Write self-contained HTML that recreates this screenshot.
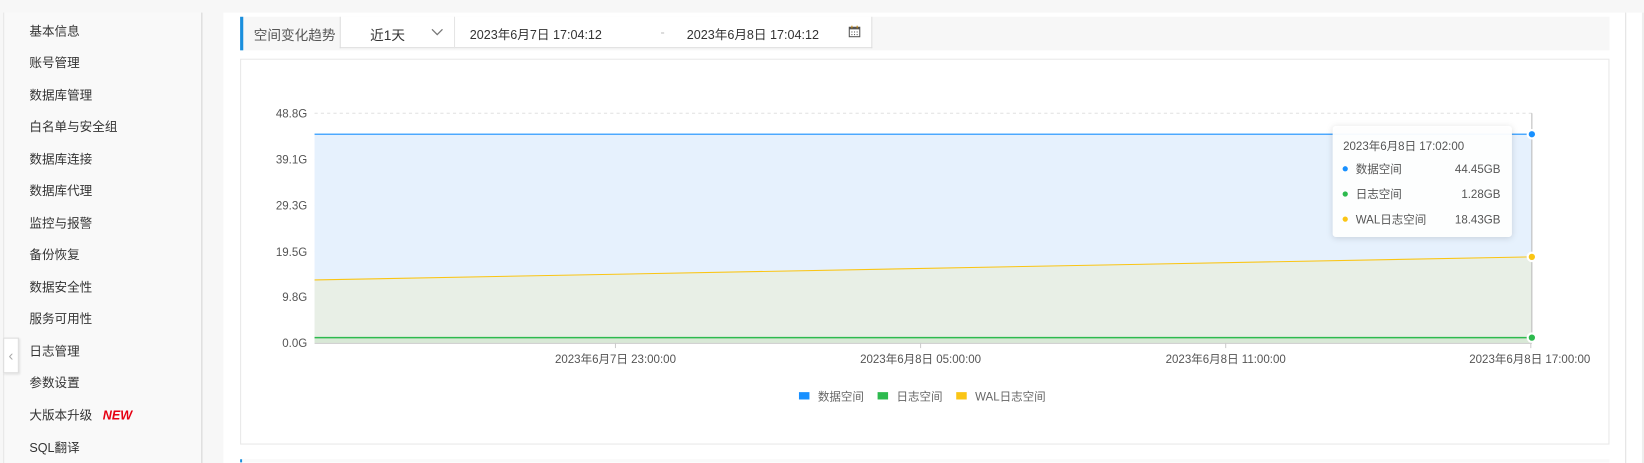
<!DOCTYPE html>
<html><head><meta charset="utf-8"><style>
*{margin:0;padding:0;box-sizing:border-box}
html,body{width:1644px;height:462px;overflow:hidden;background:#f7f7f7}
#w{position:absolute;left:0;top:0;width:1568px;height:441px;transform:scale(1.0485);transform-origin:0 0;font-family:"Liberation Sans","Noto Sans CJK SC",sans-serif;color:#333}
.main{position:absolute;left:213px;top:12px;width:1322px;height:430px;background:#fff}
.main2{position:absolute;left:1535px;top:12px;width:35px;height:430px;background:#fff}
.side{position:absolute;left:3px;top:12px;width:190px;height:430px;background:#f9f9f9;border-left:1px solid #e6e6e6;border-right:1px solid #d4d4d4}
.side div{position:absolute;left:24px;font-size:12px;color:#333;line-height:16px}
.new{color:#e60012;font-weight:bold;font-style:italic;margin-left:10px}
.coll{position:absolute;left:3px;top:322px;width:15px;height:34px;background:#fff;border:1px solid #ddd;box-shadow:1px 1px 2px rgba(0,0,0,.1);color:#aaa;font-size:14px;text-align:center;line-height:32px}
.hdr{position:absolute;left:229px;top:16px;width:1306px;height:32px;background:#f7f7f7;border-left:3px solid #1a8fdd}
.hdr .t{position:absolute;left:10px;top:7px;font-size:13px;color:#555}
.pick{position:absolute;left:324px;top:16px;width:508px;height:30px;background:#fff;border:1px solid #ddd;border-top:none;font-size:12px;color:#333}
.pick span{position:absolute;top:8px}
.box{position:absolute;left:229px;top:56px;width:1306px;height:368px;border:1px solid #e8e8e8;background:#fff}
.sb{position:absolute;left:1550px;top:12px;width:1px;height:430px;background:#e0e0e0}
.sb2{position:absolute;left:1566px;top:12px;width:2px;height:430px;background:#eee}
</style></head><body><div id="w">
<div class="main"></div><div class="main2"></div>
<div class="side">
<div style="top:10px">基本信息</div>
<div style="top:40px">账号管理</div>
<div style="top:71px">数据库管理</div>
<div style="top:101px">白名单与安全组</div>
<div style="top:132px">数据库连接</div>
<div style="top:162px">数据库代理</div>
<div style="top:193px">监控与报警</div>
<div style="top:223px">备份恢复</div>
<div style="top:254px">数据安全性</div>
<div style="top:284px">服务可用性</div>
<div style="top:315px">日志管理</div>
<div style="top:345px">参数设置</div>
<div style="top:376px">大版本升级<span class="new">NEW</span></div>
<div style="top:407px">SQL翻译</div>
</div>
<div class="coll">‹</div>
<div class="hdr"><span class="t">空间变化趋势</span></div>
<div class="pick">
<span style="left:28px;font-size:13px;top:7px">近1天</span>
<svg style="position:absolute;left:86px;top:10px" width="12" height="10" viewBox="0 0 12 10"><path d="M1 2 L6 7 L11 2" fill="none" stroke="#777" stroke-width="1.2"/></svg>
<div style="position:absolute;left:108px;top:0;width:1px;height:30px;background:#e5e5e5"></div>
<span style="left:123px">2023年6月7日 17:04:12</span>
<span style="left:305px;color:#bbb">-</span>
<span style="left:330px">2023年6月8日 17:04:12</span>
<svg style="position:absolute;left:484px;top:8px" width="12" height="12" viewBox="0 0 12 12"><rect x="1" y="2" width="10" height="9" fill="none" stroke="#555"/><rect x="1" y="2" width="10" height="2" fill="#555"/><rect x="3" y="0.5" width="1" height="2.5" fill="#c8860a"/><rect x="8" y="0.5" width="1" height="2.5" fill="#c8860a"/><g fill="#555"><rect x="3" y="6" width="1" height="1"/><rect x="5.5" y="6" width="1" height="1"/><rect x="8" y="6" width="1" height="1"/><rect x="3" y="8.5" width="1" height="1"/><rect x="5.5" y="8.5" width="1" height="1"/><rect x="8" y="8.5" width="1" height="1"/></g></svg>
</div>
<div class="box"></div>
<svg style="position:absolute;left:0;top:0" width="1568" height="441" font-family="Liberation Sans, Noto Sans CJK SC, sans-serif">
<g stroke="#e0e0e0" stroke-dasharray="3,3">
<line x1="300" y1="108" x2="1461" y2="108"/><line x1="300" y1="152" x2="1461" y2="152"/><line x1="300" y1="196" x2="1461" y2="196"/><line x1="300" y1="240" x2="1461" y2="240"/><line x1="300" y1="283" x2="1461" y2="283"/>
</g>
<polygon points="300,128 1461,128 1461,327 300,327" fill="#e6f1fd"/>
<polygon points="300,267 1461,245 1461,327 300,327" fill="#e8efe6"/>
<polygon points="300,322 1461,322 1461,327 300,327" fill="#d8e8d6"/>
<line x1="300" y1="128" x2="1461" y2="128" stroke="#1890ff"/>
<line x1="300" y1="267" x2="1461" y2="245" stroke="#fac515"/>
<line x1="300" y1="322" x2="1461" y2="322" stroke="#2dba4e" stroke-width="1.5"/>
<line x1="300" y1="327.5" x2="1461" y2="327.5" stroke="#ccc"/>
<line x1="1461" y1="108" x2="1461" y2="327" stroke="#bbb"/>
<g stroke="#ccc"><line x1="587" y1="327" x2="587" y2="332"/><line x1="878" y1="327" x2="878" y2="332"/><line x1="1169" y1="327" x2="1169" y2="332"/><line x1="1460" y1="327" x2="1460" y2="332"/></g>
<g font-size="11" fill="#555" text-anchor="end"><text x="293" y="112">48.8G</text><text x="293" y="156">39.1G</text><text x="293" y="200">29.3G</text><text x="293" y="244">19.5G</text><text x="293" y="287">9.8G</text><text x="293" y="331">0.0G</text></g>
<g font-size="11" fill="#555" text-anchor="middle"><text x="587" y="346">2023年6月7日 23:00:00</text><text x="878" y="346">2023年6月8日 05:00:00</text><text x="1169" y="346">2023年6月8日 11:00:00</text><text x="1459" y="346">2023年6月8日 17:00:00</text></g>
<g stroke="#fff" stroke-width="2"><circle cx="1461" cy="128" r="4" fill="#1890ff"/><circle cx="1461" cy="245" r="4" fill="#fac515"/><circle cx="1461" cy="322" r="4" fill="#2dba4e"/></g>
<rect x="1271" y="120" width="171" height="106" rx="3" fill="#fff" fill-opacity="0.95" style="filter:drop-shadow(0 1px 3px rgba(0,0,0,.15))"/>
<g font-size="11" fill="#555"><text x="1281" y="143">2023年6月8日 17:02:00</text>
<circle cx="1283" cy="161" r="2.5" fill="#1890ff"/><text x="1293" y="165">数据空间</text><text x="1431" y="165" text-anchor="end">44.45GB</text>
<circle cx="1283" cy="185" r="2.5" fill="#2dba4e"/><text x="1293" y="189">日志空间</text><text x="1431" y="189" text-anchor="end">1.28GB</text>
<circle cx="1283" cy="209" r="2.5" fill="#fac515"/><text x="1293" y="213">WAL日志空间</text><text x="1431" y="213" text-anchor="end">18.43GB</text></g>
<g font-size="11" fill="#666"><rect x="762" y="374" width="10" height="7" fill="#1890ff"/><text x="780" y="382">数据空间</text>
<rect x="837" y="374" width="10" height="7" fill="#2dba4e"/><text x="855" y="382">日志空间</text>
<rect x="912" y="374" width="10" height="7" fill="#fac515"/><text x="930" y="382">WAL日志空间</text></g>
<rect x="229" y="438" width="2" height="4" fill="#1a8fdd"/>
<rect x="231" y="438" width="1304" height="4" fill="#f9f9f9"/>
</svg>
<div class="sb"></div><div class="sb2"></div>
</div></body></html>
